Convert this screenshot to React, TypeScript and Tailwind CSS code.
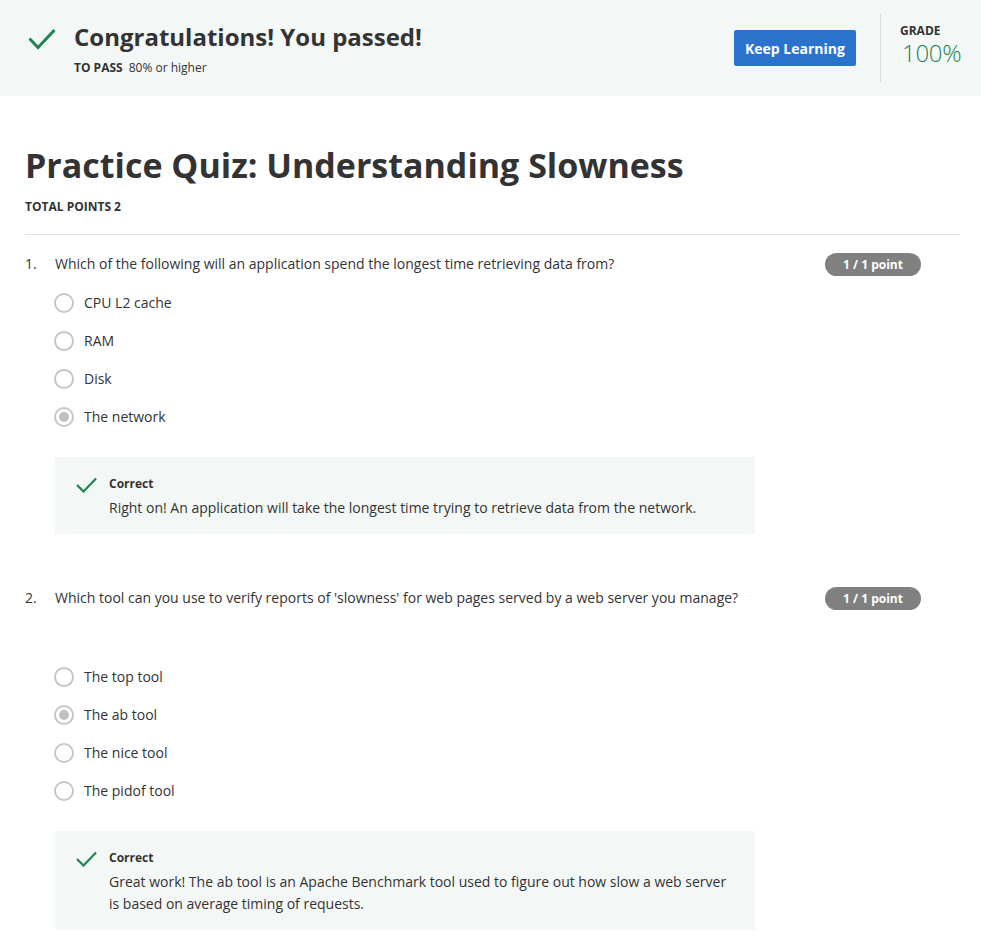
import React from "react";

function Check({ className }: { className?: string }) {
  return (
    <svg className={className} viewBox="0 0 28 22" fill="none">
      <path d="M1.5 10.5 L10 19.5 L26.5 2" stroke="#1f8354" strokeWidth="3" strokeLinecap="butt" strokeLinejoin="miter" />
    </svg>
  );
}

function SmallCheck() {
  return (
    <svg className="w-[21px] h-[16px] shrink-0 mt-[1px]" viewBox="0 0 21 16" fill="none">
      <path d="M1 8 L7.5 14.5 L20 1.5" stroke="#1f8354" strokeWidth="2.2" />
    </svg>
  );
}

function Radio({ label, selected }: { label: string; selected?: boolean }) {
  return (
    <div className="flex items-center h-[20px]">
      <div className="w-[20px] h-[20px] rounded-full border-2 border-[#c6c6c6] bg-white flex items-center justify-center shrink-0">
        {selected && <div className="w-[10px] h-[10px] rounded-full bg-[#c0c0c0]" />}
      </div>
      <span className="ml-[10px] text-[14px] leading-[20px] text-[#333]">{label}</span>
    </div>
  );
}

function Badge() {
  return (
    <div className="w-[96px] h-[23px] -mt-[1px] rounded-full bg-[#808080] text-white text-[12px] font-bold flex items-center justify-center shrink-0">
      1 / 1 point
    </div>
  );
}

function Feedback({ children }: { children: React.ReactNode }) {
  return (
    <div className="ml-[30px] w-[700px] bg-[#f3f8f6] pt-[19px] pb-[15px] pl-[21px] pr-[20px] flex">
      <SmallCheck />
      <div className="ml-[12px]">
        <div className="text-[12px] leading-[16px] font-bold text-[#333]">Correct</div>
        <div className="mt-[5px] text-[14px] leading-[22px] text-[#333]">{children}</div>
      </div>
    </div>
  );
}

export default function App() {
  return (
    <div className="w-[981px] min-h-[940px] bg-white font-['Open_Sans',sans-serif] text-[#333]">
      <header className="h-[96px] bg-[#f3f8f6] flex items-center pl-[28px] pr-[21px]">
        <Check className="w-[28px] h-[22px] shrink-0 -mt-[18px]" />
        <div className="ml-[18px] flex-1">
          <div className="text-[24px] leading-[32px] font-bold text-[#333]">Congratulations! You passed!</div>
          <div className="mt-[7px] text-[12px] leading-[16px] text-[#333]">
            <span className="font-bold">TO PASS</span>
            <span className="ml-[6px]">80% or higher</span>
          </div>
        </div>
        <button className="w-[122px] h-[36px] rounded-[2px] bg-[#2a73cc] text-white text-[14px] font-bold">Keep Learning</button>
        <div className="ml-[24px] w-px h-[68px] bg-[#dcdcdc]" />
        <div className="ml-[19px] w-[60px] self-start mt-[24px]">
          <div className="text-[12px] leading-[14px] font-bold text-[#333]">GRADE</div>
          <div className="mt-[3px] text-[24px] leading-[24px] font-light text-[#1f8354] ml-[2px] tracking-[-0.3px]">100%</div>
        </div>
      </header>

      <main className="px-[25px] pr-[21px]">
        <h1 className="mt-[47px] text-[34px] leading-[44px] font-bold text-[#333]">Practice Quiz: Understanding Slowness</h1>
        <div className="mt-[12px] text-[12px] leading-[16px] font-bold text-[#333]">TOTAL POINTS 2</div>
        <div className="mt-[19px] h-px bg-[#e1e1e1]" />

        <section className="mt-[19px] pr-[39px]">
          <div className="flex items-start">
            <span className="w-[30px] text-[14px] leading-[20px]">1.</span>
            <span className="flex-1 text-[14px] leading-[20px]">Which of the following will an application spend the longest time retrieving data from?</span>
            <Badge />
          </div>
          <div className="mt-[17px] ml-[29px] flex flex-col gap-[18px]">
            <Radio label="CPU L2 cache" />
            <Radio label="RAM" />
            <Radio label="Disk" />
            <Radio label="The network" selected />
          </div>
          <div className="mt-[30px]">
            <Feedback>Right on! An application will take the longest time trying to retrieve data from the network.</Feedback>
          </div>
        </section>

        <section className="mt-[54px] pr-[39px]">
          <div className="flex items-start">
            <span className="w-[30px] text-[14px] leading-[20px]">2.</span>
            <span className="flex-1 text-[14px] leading-[20px]">Which tool can you use to verify reports of 'slowness' for web pages served by a web server you manage?</span>
            <Badge />
          </div>
          <div className="mt-[57px] ml-[29px] flex flex-col gap-[18px]">
            <Radio label="The top tool" />
            <Radio label="The ab tool" selected />
            <Radio label="The nice tool" />
            <Radio label="The pidof tool" />
          </div>
          <div className="mt-[30px]">
            <Feedback>
              Great work! The ab tool is an Apache Benchmark tool used to figure out how slow a web server
              <br />
              is based on average timing of requests.
            </Feedback>
          </div>
        </section>
      </main>
    </div>
  );
}
